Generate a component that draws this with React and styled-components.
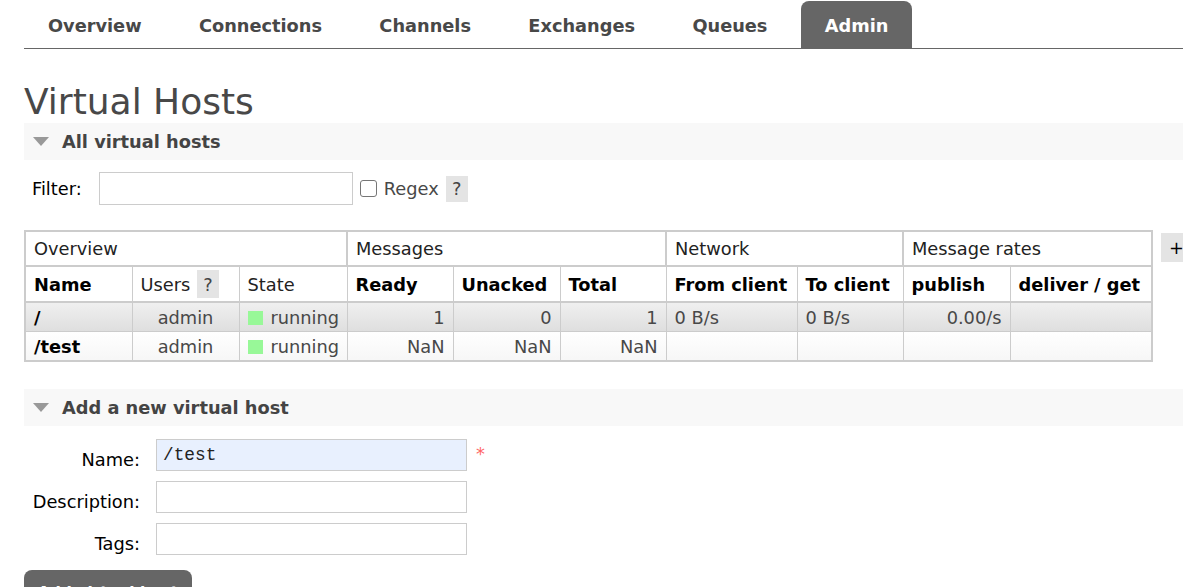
import React from 'react'
import styled, { createGlobalStyle } from 'styled-components'

const GlobalStyle = createGlobalStyle`
  html, body {
    margin: 0;
    padding: 0;
    background: #fff;
    overflow: hidden;
  }
  body {
    font-family: "DejaVu Sans", Verdana, sans-serif;
    font-size: 17.8px;
    color: #484848;
  }
`

const Page = styled.div`
  padding-left: 24px;
  width: 1200px;
`

const Nav = styled.ul`
  display: flex;
  gap: 9.4px;
  margin: 0;
  padding: 1px 0 0;
  list-style: none;
  border-bottom: 1px solid #666;
`

const Tab = styled.li`
  height: 47px;
  display: flex;
  align-items: center;
  padding: 2px 24px 0;
  box-sizing: border-box;
  font-weight: bold;
  font-size: 17.75px;
  border-radius: 8px 8px 0 0;
  color: ${p => (p.$active ? '#fff' : '#484848')};
  background: ${p => (p.$active ? '#666' : 'transparent')};
`

const Title = styled.h1`
  margin: 32px 0 0;
  font-size: 36px;
  line-height: 42px;
  font-weight: normal;
  color: #484848;
`

const SectionHeader = styled.h2`
  display: flex;
  align-items: center;
  height: 37px;
  margin: ${p => p.$top || 0}px 0 0;
  padding-left: 9px;
  background: #f8f8f8;
  font-size: 17.8px;
  font-weight: bold;
  color: #444;
`

const Arrow = styled.span`
  width: 0;
  height: 0;
  margin-right: 13px;
  border-left: 8px solid transparent;
  border-right: 8px solid transparent;
  border-top: 9px solid #999;
`

const FilterRow = styled.div`
  display: flex;
  align-items: center;
  margin-top: 12px;
  padding-left: 8px;
  color: #000;
`

const FilterInput = styled.input`
  box-sizing: border-box;
  width: 254px;
  height: 33px;
  margin: 0 7px 0 17px;
  border: 1px solid #ccc;
  font: inherit;
`

const Check = styled.span`
  box-sizing: border-box;
  width: 17px;
  height: 17px;
  border: 1px solid #767676;
  border-radius: 3px;
  margin-right: 7px;
`

const RegexLabel = styled.span`
  color: #484848;
  margin-right: 7px;
`

const Help = styled.span`
  display: inline-flex;
  align-items: center;
  justify-content: center;
  width: 22px;
  height: ${p => p.$h || 26}px;
  margin-left: ${p => p.$ml || 0}px;
  background: #e4e4e4;
  color: #444;
  font-weight: normal;
`

const TableWrap = styled.div`
  display: flex;
  align-items: flex-start;
  gap: 8px;
  margin-top: 25px;
`

const List = styled.table`
  border-collapse: collapse;
  border: 2px solid #ccc;
  table-layout: fixed;
  width: 1125px;
`

const Col = styled.col`
  width: ${p => p.$w}px;
`

const GroupHead = styled.th`
  height: 33px;
  padding: 0 8px;
  text-align: left;
  font-weight: normal;
  color: #222;
  border: 2px solid #ccc;
`

const ColHead = styled.th`
  height: 34px;
  padding: 0 8px;
  text-align: left;
  font-weight: ${p => (p.$normal ? 'normal' : 'bold')};
  color: ${p => (p.$normal ? '#222' : '#000')};
  border: 1px solid #ccc;
  border-bottom-width: 2px;
  white-space: nowrap;
`

const Row = styled.tr`
  background: ${p =>
    p.$alt ? 'linear-gradient(#f0f0f0, #dedede)' : 'linear-gradient(#fff, #f6f6f6)'};
`

const Cell = styled.td`
  height: 28px;
  padding: 0 8px;
  border: 1px solid #ccc;
  color: #484848;
  text-align: ${p => p.$align || 'left'};
  white-space: nowrap;
`

const NameCell = styled(Cell)`
  font-weight: bold;
  color: #000;
`

const StateBox = styled.span`
  display: inline-block;
  width: 15px;
  height: 14px;
  margin-right: 8px;
  vertical-align: -1px;
  background: #98f898;
`

const Toggle = styled.span`
  display: flex;
  align-items: center;
  height: 29px;
  margin-top: 3px;
  padding: 0 8px;
  background: #e4e4e4;
  color: #000;
  white-space: nowrap;
`

const Form = styled.div`
  display: grid;
  grid-template-columns: 108px 311px auto;
  column-gap: 16px;
  row-gap: 10px;
  align-items: center;
  margin-top: 13px;
  padding-left: 8px;
`

const Label = styled.label`
  text-align: right;
  color: #000;
  padding-top: 9px;
  white-space: nowrap;
`

const Input = styled.input`
  box-sizing: border-box;
  width: 311px;
  height: 32px;
  padding: 0 6px;
  border: 1px solid #ccc;
  background: ${p => (p.$filled ? '#e8f0fe' : '#fff')};
  font-family: "Liberation Mono", "Courier New", monospace;
  font-size: 17.8px;
  color: #222;
`

const Mandatory = styled.span`
  align-self: start;
  margin-left: -7px;
  margin-top: 4px;
  color: #f66;
`

const Button = styled.button`
  margin-top: 15px;
  width: 168px;
  height: 46px;
  padding: 0 10px;
  border: none;
  border-radius: 8px;
  background: #666;
  color: #fff;
  font: bold 15.5px "DejaVu Sans", Verdana, sans-serif;
  white-space: nowrap;
`

const tabs = ['Overview', 'Connections', 'Channels', 'Exchanges', 'Queues', 'Admin']
const widths = [107, 107, 108, 106, 107, 106, 131, 106, 107, 142]

const hosts = [
  { name: '/', users: 'admin', ready: '1', unacked: '0', total: '1', from: '0 B/s', to: '0 B/s', publish: '0.00/s' },
  { name: '/test', users: 'admin', ready: 'NaN', unacked: 'NaN', total: 'NaN', from: '', to: '', publish: '' }
]

export default function App () {
  return (
    <Page>
      <GlobalStyle />
      <Nav>
        {tabs.map(t => (
          <Tab key={t} $active={t === 'Admin'}>{t}</Tab>
        ))}
      </Nav>

      <Title>Virtual Hosts</Title>

      <SectionHeader><Arrow />All virtual hosts</SectionHeader>

      <FilterRow>
        Filter:
        <FilterInput type="text" />
        <Check />
        <RegexLabel>Regex</RegexLabel>
        <Help>?</Help>
      </FilterRow>

      <TableWrap>
        <List>
          <colgroup>
            {widths.map((w, i) => <Col key={i} $w={w} />)}
          </colgroup>
          <thead>
            <tr>
              <GroupHead colSpan={3}>Overview</GroupHead>
              <GroupHead colSpan={3}>Messages</GroupHead>
              <GroupHead colSpan={2}>Network</GroupHead>
              <GroupHead colSpan={2}>Message rates</GroupHead>
            </tr>
            <tr>
              <ColHead>Name</ColHead>
              <ColHead $normal>Users <Help $h={28} $ml={1}>?</Help></ColHead>
              <ColHead $normal>State</ColHead>
              <ColHead>Ready</ColHead>
              <ColHead>Unacked</ColHead>
              <ColHead>Total</ColHead>
              <ColHead>From client</ColHead>
              <ColHead>To client</ColHead>
              <ColHead>publish</ColHead>
              <ColHead>deliver / get</ColHead>
            </tr>
          </thead>
          <tbody>
            {hosts.map((h, i) => (
              <Row key={h.name} $alt={i === 0}>
                <NameCell>{h.name}</NameCell>
                <Cell $align="center">{h.users}</Cell>
                <Cell><StateBox />running</Cell>
                <Cell $align="right">{h.ready}</Cell>
                <Cell $align="right">{h.unacked}</Cell>
                <Cell $align="right">{h.total}</Cell>
                <Cell>{h.from}</Cell>
                <Cell>{h.to}</Cell>
                <Cell $align="right">{h.publish}</Cell>
                <Cell />
              </Row>
            ))}
          </tbody>
        </List>
        <Toggle>+/-</Toggle>
      </TableWrap>

      <SectionHeader $top={27}><Arrow />Add a new virtual host</SectionHeader>

      <Form>
        <Label>Name:</Label>
        <Input type="text" defaultValue="/test" $filled />
        <Mandatory>*</Mandatory>
        <Label>Description:</Label>
        <Input type="text" />
        <span />
        <Label>Tags:</Label>
        <Input type="text" />
        <span />
      </Form>

      <Button>Add virtual host</Button>
    </Page>
  )
}
